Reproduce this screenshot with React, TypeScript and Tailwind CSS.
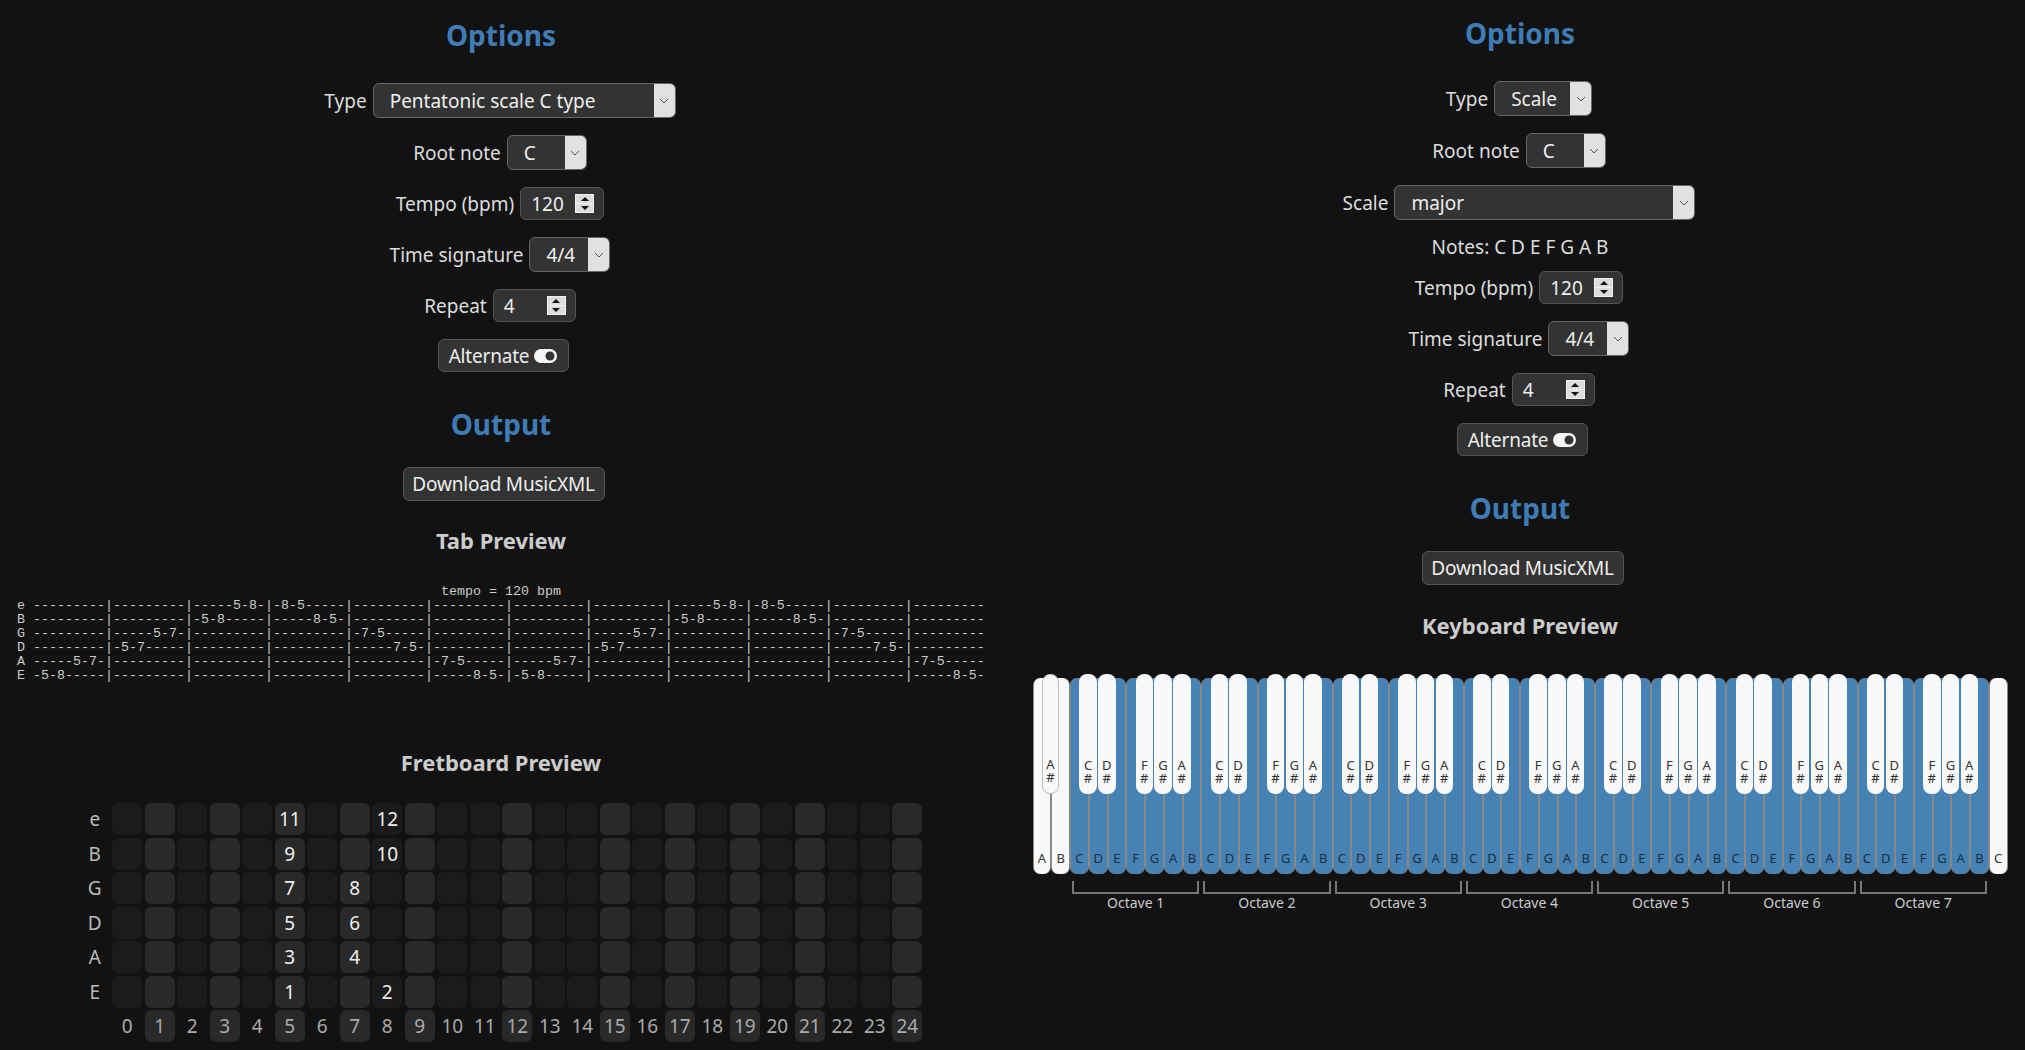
import React from "react";

const EMPTY = "---------";

// one entry per string, only the measures that hold notes
const TAB: [string, Record<number, string>][] = [
  ["e", { 3: "-----5-8-", 4: "-8-5-----", 9: "-----5-8-", 10: "-8-5-----" }],
  ["B", { 3: "-5-8-----", 4: "-----8-5-", 9: "-5-8-----", 10: "-----8-5-" }],
  ["G", { 2: "-----5-7-", 5: "-7-5-----", 8: "-----5-7-", 11: "-7-5-----" }],
  ["D", { 2: "-5-7-----", 5: "-----7-5-", 8: "-5-7-----", 11: "-----7-5-" }],
  ["A", { 1: "-----5-7-", 6: "-7-5-----", 7: "-----5-7-", 12: "-7-5-----" }],
  ["E", { 1: "-5-8-----", 6: "-----8-5-", 7: "-5-8-----", 12: "-----8-5-" }],
];

const tabLine = (name: string, notes: Record<number, string>) => {
  const measures = [];
  for (let i = 1; i <= 12; i++) measures.push(notes[i] ?? EMPTY);
  return name + " " + measures.join("|");
};

const FRET_ROWS: [string, Record<number, number>][] = [
  ["e", { 5: 11, 8: 12 }],
  ["B", { 5: 9, 8: 10 }],
  ["G", { 5: 7, 7: 8 }],
  ["D", { 5: 5, 7: 6 }],
  ["A", { 5: 3, 7: 4 }],
  ["E", { 5: 1, 8: 2 }],
];

const INLAYS = [1, 3, 5, 7, 9, 12, 15, 17, 19, 21, 24];
const FRETS = Array.from({ length: 25 }, (_, i) => i);
const OCTAVE_NOTES = ["C", "D", "E", "F", "G", "A", "B"];
const HAS_SHARP = ["C", "D", "F", "G", "A"];

const Select = ({ value, width }: { value: string; width: string }) => (
  <div className={`flex h-[35px] items-stretch overflow-hidden rounded-[6px] border border-[#666] bg-[#333] text-[#eee] ${width}`}>
    <span className="flex-1 truncate pl-[16px] leading-[35px]">{value}</span>
    <span className="flex w-[21px] items-center justify-center bg-[#e1e1e1]">
      <svg width="10" height="6" viewBox="0 0 10 6" fill="none" stroke="#555" strokeWidth="1">
        <path d="M1 1l4 4 4-4" />
      </svg>
    </span>
  </div>
);

const Spinner = () => (
  <span className="flex h-[19px] w-[19px] flex-col gap-px border border-[#f0f0f0] bg-[#f0f0f0]">
    <span className="flex flex-1 items-center justify-center bg-[#dcdcdc]">
      <svg width="8" height="4" viewBox="0 0 8 4"><path d="M4 0l4 4H0z" fill="#111" /></svg>
    </span>
    <span className="flex flex-1 items-center justify-center bg-[#dcdcdc]">
      <svg width="8" height="4" viewBox="0 0 8 4"><path d="M0 0h8L4 4z" fill="#111" /></svg>
    </span>
  </span>
);

const NumberInput = ({ value, width }: { value: string; width: string }) => (
  <div className={`flex h-[33px] items-center justify-between rounded-[6px] border border-[#555] bg-[#333] pl-[10px] pr-[9px] text-[#eee] ${width}`}>
    <span className="pt-[2px]">{value}</span>
    <Spinner />
  </div>
);

const Row = ({ label, children }: { label: string; children: React.ReactNode }) => (
  <div className="mb-[17px] flex items-center justify-center gap-[6px] pr-[2px] text-[#ddd]">
    <span className="pt-[2px]">{label}</span>
    {children}
  </div>
);

const Button = ({ children, className = "" }: { children: React.ReactNode; className?: string }) => (
  <button className={`inline-flex h-[33px] items-center justify-center rounded-[6px] border border-[#555] bg-[#333] pt-[1px] text-[#eee] ${className}`}>
    {children}
  </button>
);

const Heading = ({ children, className = "" }: { children: React.ReactNode; className?: string }) => (
  <h2 className={`text-center text-[28px] font-bold leading-[36px] text-[#3f7cb6] ${className}`}>{children}</h2>
);

const SubHeading = ({ children, className = "" }: { children: React.ReactNode; className?: string }) => (
  <h3 className={`text-center text-[22px] font-bold leading-[28px] text-[#ccc] ${className}`}>{children}</h3>
);

const SharedControls = () => (
  <>
    <Row label="Tempo (bpm)">
      <NumberInput value="120" width="w-[84px]" />
    </Row>
    <Row label="Time signature">
      <Select value="4/4" width="w-[81px]" />
    </Row>
    <Row label="Repeat">
      <NumberInput value="4" width="w-[83px]" />
    </Row>
    <div className="flex justify-center pl-[4px]">
      <Button className="w-[131px] gap-[5px] tracking-[-0.2px]">
        Alternate
        <svg width="23" height="14" viewBox="0 0 23 14">
          <rect width="23" height="14" rx="7" fill="#f5f5f5" />
          <circle cx="16" cy="7" r="4.5" fill="#333" />
        </svg>
      </Button>
    </div>
    <Heading className="mt-[34px]">Output</Heading>
    <div className="mt-[25px] flex justify-center pl-[5px]">
      <Button className="h-[34px] w-[202px] tracking-[-0.2px]">Download MusicXML</Button>
    </div>
  </>
);

const Fretboard = () => (
  <div className="mt-[27px] grid grid-cols-[repeat(26,30px)] auto-rows-[32px] justify-center gap-[2.5px]">
    {FRET_ROWS.map(([name, notes]) => (
      <React.Fragment key={name}>
        <div className="flex items-center justify-center pt-[1px] text-[#bbb]">{name}</div>
        {FRETS.map((f) => (
          <div
            key={f}
            className={`flex items-center justify-center rounded-[6px] pt-[1px] text-[#eee] ${INLAYS.includes(f) ? "bg-[#292929]" : "bg-[#1b1b1b]"}`}
          >
            {notes[f]}
          </div>
        ))}
      </React.Fragment>
    ))}
    <div />
    {FRETS.map((f) => (
      <div
        key={f}
        className={`flex items-center justify-center rounded-[6px] pt-[1px] text-[#aaa] ${INLAYS.includes(f) ? "bg-[#292929]" : ""}`}
      >
        {f}
      </div>
    ))}
  </div>
);

const WhiteKey = ({ note, sharp, pressed }: { note: string; sharp?: boolean; pressed?: boolean }) => (
  <div
    className={`relative flex h-[196px] w-[18.75px] items-end justify-center rounded-[7px] border-x border-[#888] pb-[7px] text-[13px] leading-[18px] ${pressed ? "bg-[#4682b4] text-[#1c2f40]" : "bg-[#f8f8f8] text-[#333]"}`}
  >
    {note}
    {sharp && (
      <div
        className={`absolute bottom-[80px] right-[-9px] z-10 flex h-[120px] w-[17.5px] items-end justify-center break-all rounded-[8px] pb-[10px] text-center text-[13px] leading-[12.5px] text-[#333] ${pressed ? "bg-[#f8f8f8]" : "border border-[#bbb] bg-[#f8f8f8]"}`}
      >
        <span className="w-[12px]">{note}#</span>
      </div>
    )}
  </div>
);

const Keyboard = () => (
  <div className="mx-auto mt-[35px] w-[975px]">
    <div className="flex pt-[4px]">
      <WhiteKey note="A" sharp />
      <WhiteKey note="B" />
      {Array.from({ length: 7 }).map((_, octave) =>
        OCTAVE_NOTES.map((n) => (
          <WhiteKey key={`${octave}${n}`} note={n} sharp={HAS_SHARP.includes(n)} pressed />
        ))
      )}
      <WhiteKey note="C" />
    </div>
    <div className="mt-[7px] flex pl-[37.5px]">
      {Array.from({ length: 7 }).map((_, i) => (
        <div key={i} className="w-[131.25px] px-[2px] text-center text-[14px] text-[#ccc]">
          <div className="h-[13px] border-x-2 border-b-2 border-[#777]" />
          <div className="leading-[18px]">Octave {i + 1}</div>
        </div>
      ))}
    </div>
  </div>
);

export default function App() {
  return (
    <div className="flex h-[1050px] w-[2025px] items-start gap-[17px] overflow-hidden bg-[#121212] font-['Noto_Sans','Open_Sans',sans-serif] text-[19px]">
      <section className="w-[1002px] pt-[17px]">
        <Heading className="mb-[30px]">Options</Heading>
        <Row label="Type">
          <Select value="Pentatonic scale C type" width="w-[303px]" />
        </Row>
        <Row label="Root note">
          <Select value="C" width="w-[80px]" />
        </Row>
        <SharedControls />
        <SubHeading className="mt-[25px]">Tab Preview</SubHeading>
        <pre className="mt-[31px] pl-[17px] font-['Liberation_Mono',monospace] text-[13.33px] leading-[14px] text-[#ccc]">
          <span className="-ml-[17px] block text-center">tempo = 120 bpm</span>
          {TAB.map(([name, notes]) => (
            <span key={name} className="block">{tabLine(name, notes)}</span>
          ))}
        </pre>
        <SubHeading className="mt-[65px]">Fretboard Preview</SubHeading>
        <Fretboard />
      </section>
      <section className="w-[1002px] pt-[15px]">
        <Heading className="mb-[30px]">Options</Heading>
        <Row label="Type">
          <Select value="Scale" width="w-[98px]" />
        </Row>
        <Row label="Root note">
          <Select value="C" width="w-[80px]" />
        </Row>
        <Row label="Scale">
          <Select value="major" width="w-[301px]" />
        </Row>
        <p className="mb-[12px] mt-[-2px] text-center leading-[24px] text-[#ddd]">Notes: C D E F G A B</p>
        <SharedControls />
        <SubHeading className="mt-[26px]">Keyboard Preview</SubHeading>
        <Keyboard />
      </section>
    </div>
  );
}
